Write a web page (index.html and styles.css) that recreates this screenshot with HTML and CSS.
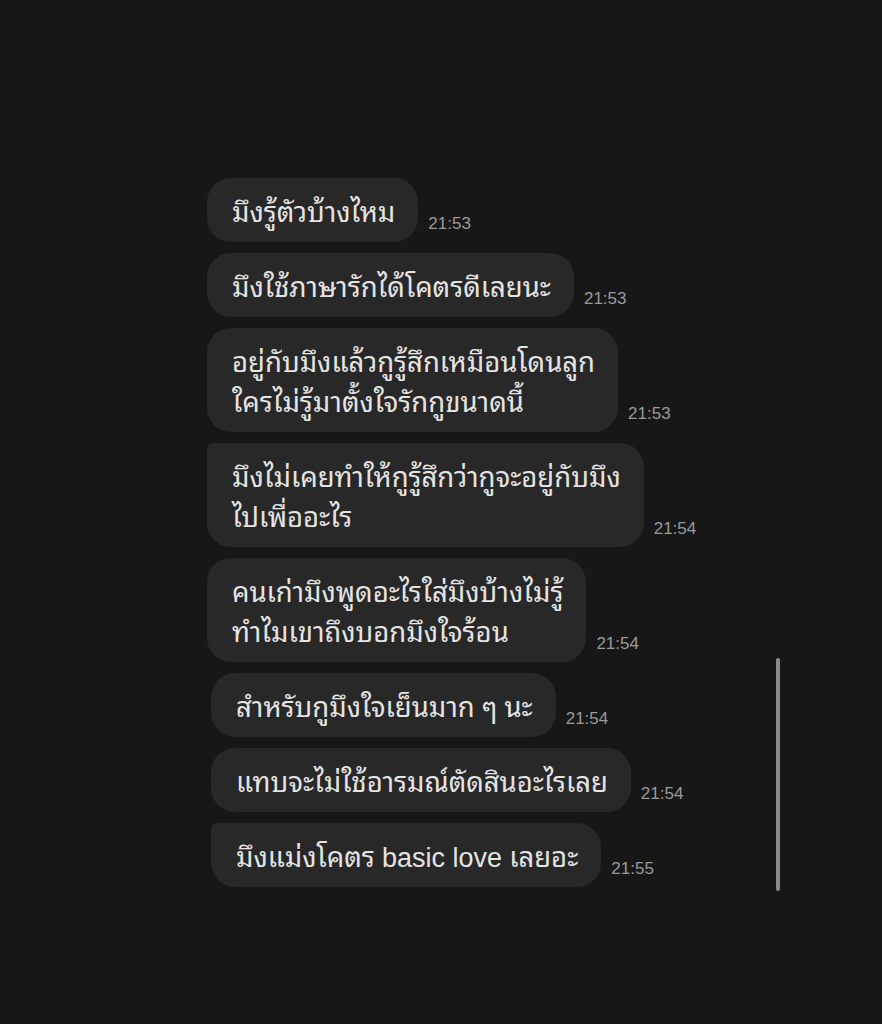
FILE: index.html
```html
<!DOCTYPE html>
<html lang="th">
<head>
<meta charset="utf-8">
<link rel="stylesheet" href="styles.css">
</head>
<body>
<div class="screen">
  <div class="chat">
    <div class="row"><div class="bubble">มึงรู้ตัวบ้างไหม</div><span class="time">21:53</span></div>
    <div class="row"><div class="bubble">มึงใช้ภาษารักได้โคตรดีเลยนะ</div><span class="time">21:53</span></div>
    <div class="row"><div class="bubble">อยู่กับมึงแล้วกูรู้สึกเหมือนโดนลูก<br>ใครไม่รู้มาตั้งใจรักกูขนาดนี้</div><span class="time">21:53</span></div>
    <div class="row"><div class="bubble tail">มึงไม่เคยทำให้กูรู้สึกว่ากูจะอยู่กับมึง<br>ไปเพื่ออะไร</div><span class="time">21:54</span></div>
    <div class="row"><div class="bubble">คนเก่ามึงพูดอะไรใส่มึงบ้างไม่รู้<br>ทำไมเขาถึงบอกมึงใจร้อน</div><span class="time">21:54</span></div>
    <div class="row shift"><div class="bubble">สำหรับกูมึงใจเย็นมาก ๆ นะ</div><span class="time">21:54</span></div>
    <div class="row shift"><div class="bubble">แทบจะไม่ใช้อารมณ์ตัดสินอะไรเลย</div><span class="time">21:54</span></div>
    <div class="row shift"><div class="bubble tail">มึงแม่งโคตร <span class="latin">basic love</span> เลยอะ</div><span class="time">21:55</span></div>
  </div>
  <div class="scrollbar"></div>
</div>
</body>
</html>
```

FILE: styles.css
```css
html, body {
  margin: 0;
  padding: 0;
  background: #171717;
}
.screen {
  position: relative;
  width: 882px;
  height: 1024px;
  background: #171717;
  overflow: hidden;
}
.chat {
  display: flex;
  flex-direction: column;
  align-items: flex-start;
  gap: 11px;
  padding: 178px 0 0 207px;
}
.row {
  display: flex;
  align-items: flex-end;
  gap: 10px;
}
.row.shift {
  margin-left: 4px;
}
.bubble {
  position: relative;
  background: #282828;
  color: #e4e4e4;
  font-family: "Noto Sans Thai Looped", "Loma", "Garuda", "Sarabun", "Norasi", "Tlwg Typo", "Noto Sans Thai", sans-serif;
  font-size: 27.5px;
  line-height: 40px;
  padding: 12px 23px 12px 25px;
  border-radius: 24px;
}
.latin {
  font-family: "Liberation Sans", Arial, sans-serif;
  font-size: 27px;
  line-height: 1;
}
.bubble.tail {
  border-top-left-radius: 6px;
}
.time {
  font-family: "Liberation Sans", Arial, sans-serif;
  font-size: 17px;
  color: #9a9a9a;
  margin-bottom: 8px;
}
.scrollbar {
  position: absolute;
  left: 776px;
  top: 658px;
  width: 4px;
  height: 233px;
  border-radius: 2px;
  background: #8c8c8c;
}
```
